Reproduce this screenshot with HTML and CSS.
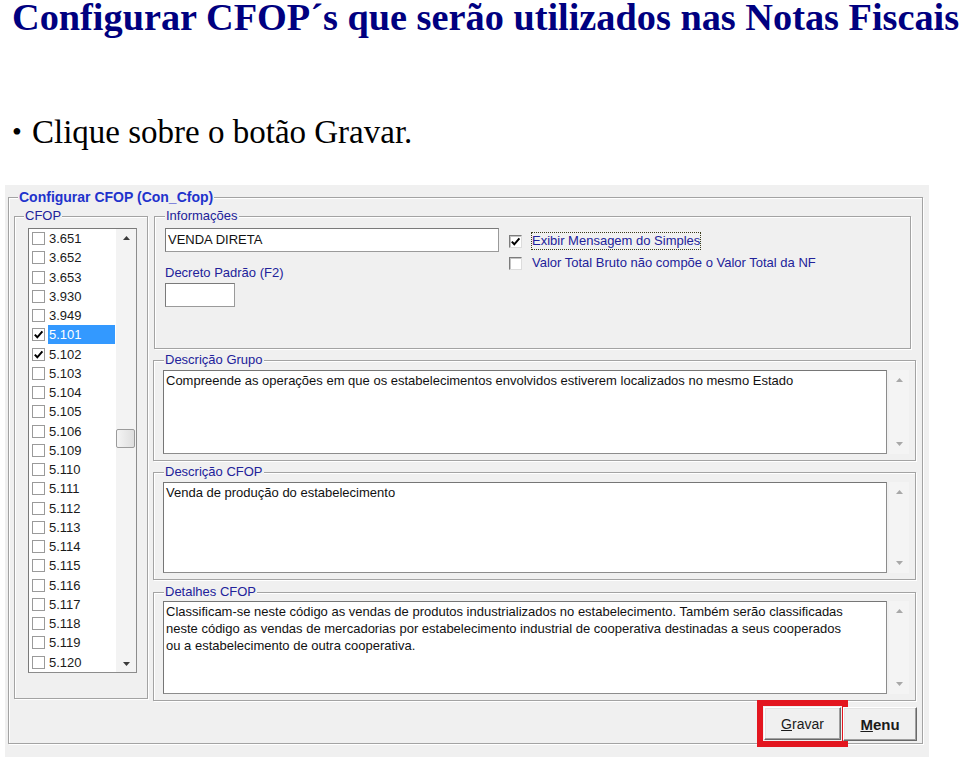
FILE: index.html
```html
<!DOCTYPE html>
<html lang="pt-BR">
<head>
<meta charset="utf-8">
<title>Configurar CFOP</title>
<link rel="stylesheet" href="styles.css">
</head>
<body>
<h1 class="page-title">Configurar CFOP´s que serão utilizados nas Notas Fiscais</h1>
<ul class="steps"><li><span class="bullet">•</span><span>Clique sobre o botão Gravar.</span></li></ul>
<div class="window">
  <div class="group outer">
    <span class="group-title outer-title">Configurar CFOP (Con_Cfop)</span>
    <div class="layout">
      <div class="group cfop">
        <span class="group-title">CFOP</span>
        <div class="listbox">
          <div class="rows">
            <div class="row"><span class="cb"></span><span class="code">3.651</span></div>
            <div class="row"><span class="cb"></span><span class="code">3.652</span></div>
            <div class="row"><span class="cb"></span><span class="code">3.653</span></div>
            <div class="row"><span class="cb"></span><span class="code">3.930</span></div>
            <div class="row"><span class="cb"></span><span class="code">3.949</span></div>
            <div class="row"><span class="cb"><svg class="tick" viewBox="0 0 11 11" width="11" height="11"><path d="M1.8 5.6 L4.3 8.3 L9.4 2.4" fill="none" stroke="#000" stroke-width="2"/></svg></span><span class="code selected">5.101</span></div>
            <div class="row"><span class="cb"><svg class="tick" viewBox="0 0 11 11" width="11" height="11"><path d="M1.8 5.6 L4.3 8.3 L9.4 2.4" fill="none" stroke="#000" stroke-width="2"/></svg></span><span class="code">5.102</span></div>
            <div class="row"><span class="cb"></span><span class="code">5.103</span></div>
            <div class="row"><span class="cb"></span><span class="code">5.104</span></div>
            <div class="row"><span class="cb"></span><span class="code">5.105</span></div>
            <div class="row"><span class="cb"></span><span class="code">5.106</span></div>
            <div class="row"><span class="cb"></span><span class="code">5.109</span></div>
            <div class="row"><span class="cb"></span><span class="code">5.110</span></div>
            <div class="row"><span class="cb"></span><span class="code">5.111</span></div>
            <div class="row"><span class="cb"></span><span class="code">5.112</span></div>
            <div class="row"><span class="cb"></span><span class="code">5.113</span></div>
            <div class="row"><span class="cb"></span><span class="code">5.114</span></div>
            <div class="row"><span class="cb"></span><span class="code">5.115</span></div>
            <div class="row"><span class="cb"></span><span class="code">5.116</span></div>
            <div class="row"><span class="cb"></span><span class="code">5.117</span></div>
            <div class="row"><span class="cb"></span><span class="code">5.118</span></div>
            <div class="row"><span class="cb"></span><span class="code">5.119</span></div>
            <div class="row"><span class="cb"></span><span class="code">5.120</span></div>
          </div>
          <div class="vscroll">
            <div class="arrow"><svg width="7" height="4" viewBox="0 0 7 4"><path d="M0 4 L3.5 0 L7 4Z" fill="#3a3a3a"/></svg></div>
            <div class="thumb"></div>
            <div class="spacer"></div>
            <div class="arrow"><svg width="7" height="4" viewBox="0 0 7 4"><path d="M0 0 L3.5 4 L7 0Z" fill="#3a3a3a"/></svg></div>
          </div>
        </div>
      </div>

      <div class="right-col">
        <div class="group info">
          <span class="group-title">Informações</span>
          <div class="info-body">
            <div class="info-left">
              <div class="input wide">VENDA DIRETA</div>
              <div class="label">Decreto Padrão (F2)</div>
              <div class="input small"></div>
            </div>
            <div class="info-checks">
              <div class="check-row"><span class="cb sunken"><svg class="tick" viewBox="0 0 11 11" width="11" height="11"><path d="M1.8 5.6 L4.3 8.3 L9.4 2.4" fill="none" stroke="#000" stroke-width="2"/></svg></span><span class="check-label focus">Exibir Mensagem do Simples</span></div>
              <div class="check-row"><span class="cb sunken"></span><span class="check-label">Valor Total Bruto não compõe o Valor Total da NF</span></div>
            </div>
          </div>
        </div>

        <div class="group desc desc-grupo">
          <span class="group-title">Descrição Grupo</span>
          <div class="memo-wrap">
            <div class="memo">Compreende as operações em que os estabelecimentos envolvidos estiverem localizados no mesmo Estado</div>
            <div class="memo-scroll">
              <div class="arrow"><svg width="7" height="4" viewBox="0 0 7 4"><path d="M0 4 L3.5 0 L7 4Z" fill="#a8a8a8"/></svg></div>
              <div class="arrow"><svg width="7" height="4" viewBox="0 0 7 4"><path d="M0 0 L3.5 4 L7 0Z" fill="#a8a8a8"/></svg></div>
            </div>
          </div>
        </div>

        <div class="group desc desc-cfop">
          <span class="group-title">Descrição CFOP</span>
          <div class="memo-wrap">
            <div class="memo">Venda de produção do estabelecimento</div>
            <div class="memo-scroll">
              <div class="arrow"><svg width="7" height="4" viewBox="0 0 7 4"><path d="M0 4 L3.5 0 L7 4Z" fill="#a8a8a8"/></svg></div>
              <div class="arrow"><svg width="7" height="4" viewBox="0 0 7 4"><path d="M0 0 L3.5 4 L7 0Z" fill="#a8a8a8"/></svg></div>
            </div>
          </div>
        </div>

        <div class="group desc detalhes">
          <span class="group-title">Detalhes CFOP</span>
          <div class="memo-wrap">
            <div class="memo">
              <div>Classificam-se neste código as vendas de produtos industrializados no estabelecimento. Também serão classificadas</div>
              <div>neste código as vendas de mercadorias por estabelecimento industrial de cooperativa destinadas a seus cooperados</div>
              <div>ou a estabelecimento de outra cooperativa.</div>
            </div>
            <div class="memo-scroll">
              <div class="arrow"><svg width="7" height="4" viewBox="0 0 7 4"><path d="M0 4 L3.5 0 L7 4Z" fill="#a8a8a8"/></svg></div>
              <div class="arrow"><svg width="7" height="4" viewBox="0 0 7 4"><path d="M0 0 L3.5 4 L7 0Z" fill="#a8a8a8"/></svg></div>
            </div>
          </div>
        </div>
      </div>
    </div>

    <div class="buttons">
      <button class="btn btn-gravar" type="button"><u>G</u>ravar</button>
      <button class="btn btn-menu" type="button"><u>M</u>enu</button>
    </div>
  </div>
</div>
</body>
</html>
```

FILE: styles.css
```css
* { box-sizing: border-box; }

html, body {
  margin: 0;
  padding: 0;
  background: #fff;
}

body {
  width: 960px;
  height: 760px;
  overflow: hidden;
  font-family: "Liberation Serif", "Times New Roman", serif;
}

.page-title {
  margin: 0;
  padding-left: 12px;
  height: 33px;
  font: bold 38.3px/34px "Liberation Serif", "Times New Roman", serif;
  color: #000080;
  white-space: nowrap;
}

.steps {
  list-style: none;
  margin: 79px 0 0;
  padding: 0 0 0 12px;
  height: 40px;
  font: 33px/40px "Liberation Serif", "Times New Roman", serif;
  color: #000;
}

.steps li { display: flex; }

.bullet {
  width: 20px;
  font-size: 28px;
}

/* ---------- window ---------- */
.window {
  margin: 33px 0 0 5px;
  width: 924px;
  height: 572px;
  padding: 12px 0 0 3px;
  background: #f0f0f0;
  font: 13px "Liberation Sans", Arial, sans-serif;
  color: #1a1a1a;
}

.group {
  border: 1px solid #a3a3a3;
  box-shadow: inset 1px 1px 0 #fff, 1px 1px 0 #fff;
}

.group-title {
  display: block;
  width: max-content;
  height: 14px;
  line-height: 14px;
  margin-top: -8px;
  padding: 0 1px;
  background: #f0f0f0;
  color: #22229a;
  white-space: nowrap;
}

.outer {
  width: 915px;
  height: 547px;
  padding: 0 6px 3px 5px;
}

.outer-title {
  margin-left: 4px;
  font-weight: bold;
  font-size: 14px;
  color: #1f33cc;
}

.layout {
  margin-top: 12px;
  display: grid;
  grid-template-columns: 134px 763px;
  column-gap: 5px;
  height: 485px;
  align-items: start;
}

/* ---------- CFOP list ---------- */
.cfop {
  height: 483px;
  padding-left: 13px;
}

.cfop .group-title { margin-left: -4px; }

.listbox {
  margin-top: 5px;
  width: 109px;
  height: 445px;
  display: flex;
  background: #fff;
  border: 1px solid #8c8c8c;
  border-top-color: #7a7a7a;
  border-left-color: #7a7a7a;
}

.rows {
  width: 87px;
}

.row {
  height: 19.26px;
  display: flex;
  align-items: center;
}

.cb {
  flex: none;
  width: 13px;
  height: 13px;
  margin-left: 3px;
  border: 1px solid #9a9a9a;
  background: #fff;
  display: flex;
  align-items: center;
  justify-content: center;
}

.tick { display: block; }

.code {
  margin-left: 3px;
  padding-left: 1px;
  width: 67px;
  height: 19px;
  line-height: 19px;
  color: #1a1a1a;
}

.code.selected {
  background: #3399ff;
  color: #fff;
}

.vscroll {
  width: 20px;
  display: flex;
  flex-direction: column;
  background: #f3f3f3;
}

.vscroll .arrow {
  height: 17px;
  display: flex;
  align-items: center;
  justify-content: center;
}

.thumb {
  margin-top: 183px;
  width: 19px;
  height: 19px;
  border: 1px solid #9b9b9b;
  border-radius: 2px;
  background: linear-gradient(90deg, #f4f4f4, #dedede);
}

.spacer { flex: 1; }

/* ---------- right column ---------- */
.right-col {
  display: flex;
  flex-direction: column;
}

.info {
  margin-left: 1px;
  width: 757px;
  height: 133px;
  padding-left: 10px;
}

.info .group-title { margin-left: 0; }

.info-body {
  margin-top: 5px;
  display: flex;
}

.info-left {
  width: 334px;
}

.input {
  height: 24px;
  background: #fff;
  border: 1px solid #9a9a9a;
  border-top-color: #7a7a7a;
  border-left-color: #7a7a7a;
  padding-left: 2px;
  line-height: 22px;
  color: #111;
}

.input.wide { width: 334px; }
.input.small { width: 70px; margin-top: 3px; }

.label {
  margin-top: 13px;
  line-height: 15px;
  color: #22229a;
}

.info-checks {
  margin-left: 10px;
  margin-top: 2px;
}

.check-row {
  height: 22px;
  display: flex;
  align-items: center;
}

.cb.sunken {
  margin-left: 0;
  border-color: #7c7c7c #dcdcdc #dcdcdc #7c7c7c;
  box-shadow: inset 1px 1px 0 #c4c4c4;
}

.check-label {
  margin-left: 9px;
  border: 1px solid transparent;
  line-height: 16px;
  color: #22229a;
  white-space: nowrap;
}

.check-label.focus {
  border: 1px dotted #3a3a1a;
}

.desc {
  width: 763px;
  padding-left: 9px;
}

.desc .group-title { margin-left: 1px; }

.desc-grupo { margin-top: 11px; height: 101px; }
.desc-cfop  { margin-top: 11px; height: 108px; }
.detalhes   { margin-top: 12px; height: 109px; }

.memo-wrap {
  margin-top: 3px;
  display: flex;
}

.detalhes .memo-wrap { margin-top: 2px; }

.memo {
  width: 724px;
  background: #fff;
  border: 1px solid #8c8c8c;
  border-top-color: #767676;
  border-left-color: #767676;
  padding: 1px 2px;
  line-height: 17px;
  color: #111;
  white-space: nowrap;
  overflow: hidden;
}

.desc-grupo .memo { height: 84px; }
.desc-cfop .memo  { height: 91px; }
.detalhes .memo   { height: 93px; }

.memo-scroll {
  margin-left: 2px;
  width: 20px;
  display: flex;
  flex-direction: column;
  justify-content: space-between;
  background: #f4f4f4;
}

.memo-scroll .arrow {
  height: 20px;
  display: flex;
  align-items: center;
  justify-content: center;
}

/* ---------- buttons ---------- */
.buttons {
  margin-top: 6px;
  margin-right: -1px;
  display: flex;
  justify-content: flex-end;
  gap: 2px;
}

.btn {
  height: 33px;
  padding: 0;
  font: 14px "Liberation Sans", Arial, sans-serif;
  color: #1a1a1a;
  background: #f0f0f0;
  border: 1px solid;
  border-color: #ffffff #696969 #696969 #ffffff;
  box-shadow: inset -1px -1px 0 #a0a0a0, inset 1px 1px 0 #e3e3e3;
}

.btn-gravar {
  width: 77px;
  outline: 6px solid #e3161f;
  outline-offset: 1px;
}

.btn-menu {
  width: 74px;
  height: 34px;
  font-weight: bold;
  font-size: 15px;
}
```
